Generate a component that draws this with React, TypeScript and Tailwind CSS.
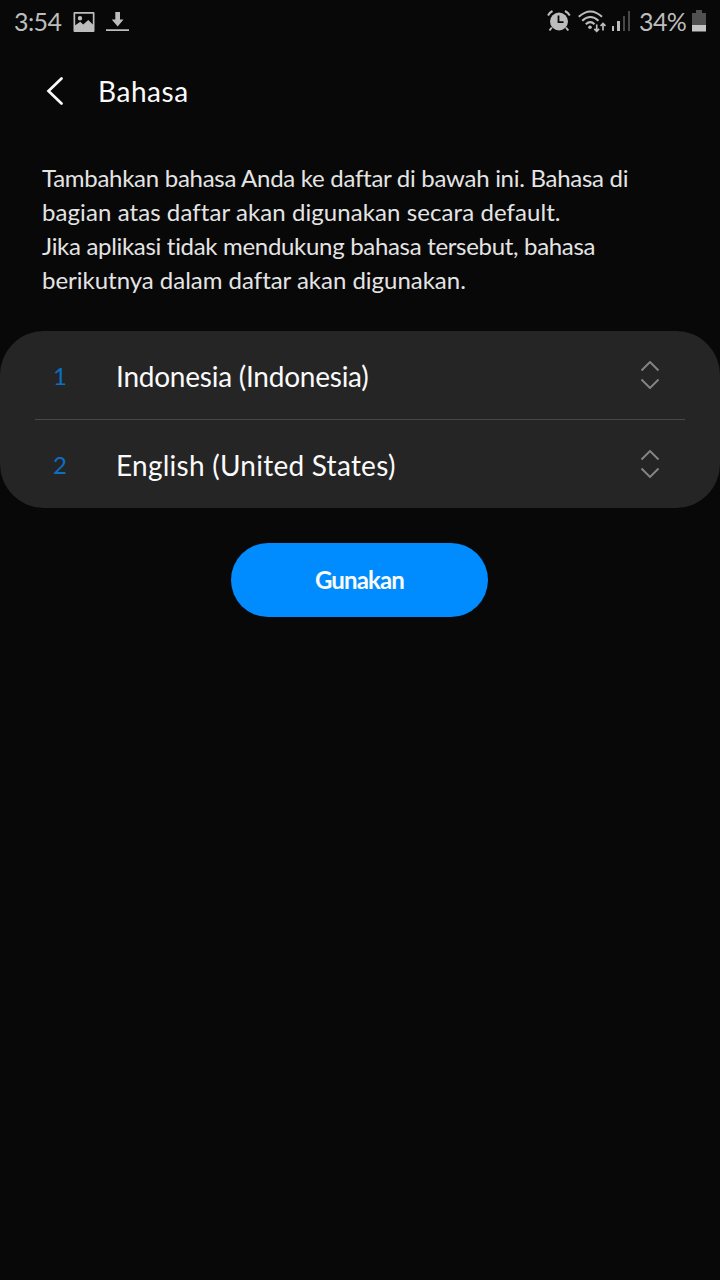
import React from "react";

function StatusBar() {
  return (
    <div className="flex h-11 items-center text-[#bdbdbd]">
      <span className="ml-[14px] w-[59px] text-[25px] leading-[44px] tracking-[-0.6px] pb-[2px] box-border">3:54</span>
      <svg className="h-5 w-[22px]" viewBox="0 0 22 20">
        <path
          fill="#bdbdbd"
          fillRule="evenodd"
          d="M1.5 0H20.5Q21.5 0 21.5 1V19Q21.5 20 20.5 20H1.5Q.5 20 .5 19V1Q.5 0 1.5 0ZM2.2 1.8V13.2L7.3 9.8L10.2 12.4L15.3 8L19.8 12.5V1.8ZM7 4A2.2 2.2 0 1 1 7 8.4A2.2 2.2 0 1 1 7 4Z"
        />
      </svg>
      <svg className="ml-[11px] h-5 w-[23px]" viewBox="0 0 23 20">
        <path fill="#bdbdbd" d="M9.3 0H14V7.5H17.5L11.7 14.5L5.7 7.5H9.3ZM0 17.2H23V19H0Z" />
      </svg>
      <div className="flex-1" />
      <svg className="mb-[2px] h-[22px] w-6" viewBox="0 0 24 22" fill="none">
        <circle cx="12" cy="11.5" r="9" fill="#bdbdbd" />
        <path
          stroke="#bdbdbd"
          strokeWidth="2"
          d="M1 5.5Q2.5 2.5 5.5 1M18 1Q21 2.5 22.8 5.5M4.8 17.5L2.5 20.5M19 17.5L21.3 20.5"
        />
        <path stroke="#080808" strokeWidth="1.8" d="M11.5 5.5V12.2H16.5" />
      </svg>
      <svg className="ml-[7px] mb-[2px] h-[23px] w-7" viewBox="0 0 28 23" fill="none">
        <path
          stroke="#bdbdbd"
          strokeWidth="2.1"
          d="M.8 6.8Q12.5-3.8 24 6.8M4.2 10.8Q12.3 3.2 20.5 10.8M7.8 14.2Q12.3 10 16.5 14.2"
        />
        <circle cx="12" cy="17.2" r="1.8" fill="#bdbdbd" />
        <path
          stroke="#bdbdbd"
          strokeWidth="1.7"
          d="M18.7 14.5V21M16.3 18.8L18.7 21.2L21.1 18.8M25 20.5V14M22.5 16L25 13.5L27.5 16"
        />
      </svg>
      <div className="ml-[6px] flex h-5 w-[19px] items-end gap-[3px] mb-[2px]">
        <div className="h-[5px] w-[2.3px] bg-[#bdbdbd]" />
        <div className="h-[10px] w-[2.3px] bg-[#bdbdbd]" />
        <div className="h-[15px] w-[2.3px] bg-[#484848]" />
        <div className="h-5 w-[2.3px] bg-[#484848]" />
      </div>
      <span className="ml-[8px] w-[50px] pb-[2px] text-[25px] leading-[44px] tracking-[-0.6px]">34%</span>
      <svg className="mr-[14px] mb-[2px] ml-[3px] h-[22px] w-[14px]" viewBox="0 0 14 22">
        <path fill="#505050" d="M4 0H10V3H14V15.5H0V3H4Z" />
        <path fill="#c4c4c4" d="M0 15H14V21.5H0Z" />
      </svg>
    </div>
  );
}

function LanguageRow({ index, label, labelClass }: { index: number; label: string; labelClass: string }) {
  return (
    <div className="flex h-[88px] items-center">
      <span className="-mr-px box-content w-[50px] pl-[35px] pt-[2px] text-center text-[24px] text-[#0b70c4]">{index}</span>
      <span className={`ml-8 flex-1 whitespace-nowrap pt-[2px] text-[28px] leading-[40px] text-[#fafafa] ${labelClass}`}>
        {label}
      </span>
      <svg className="mr-[60px] h-7 w-5" viewBox="0 0 20 28" fill="none" stroke="#858585" strokeWidth="1.9">
        <path d="M1.5 9.5L10 1L18.5 9.5M1.5 18.5L10 27L18.5 18.5" />
      </svg>
    </div>
  );
}

export default function App() {
  return (
    <div className="flex h-[1280px] w-[720px] flex-col bg-[#080808] font-['Lato',sans-serif] [font-variant-ligatures:none]">
      <StatusBar />
      <header className="flex h-[95px] items-center">
        <svg className="mb-px ml-[46px] h-7 w-[18px]" viewBox="0 0 18 28" fill="none">
          <path stroke="#fafafa" strokeWidth="2.7" strokeLinecap="round" d="M15.5 1.5L2.5 14L15.5 26.5" />
        </svg>
        <h1 className="ml-[34px] pb-[2px] text-[28px] tracking-[0.55px] text-[#fafafa]">Bahasa</h1>
      </header>
      <div className="ml-[42px] mt-[22px] h-[170px] whitespace-nowrap text-[24px] leading-[34px] text-[#e4e4e4]">
        <p className="tracking-[-0.28px]">Tambahkan bahasa Anda ke daftar di bawah ini. Bahasa di</p>
        <p className="tracking-[0.08px]">bagian atas daftar akan digunakan secara default.</p>
        <p className="tracking-[-0.31px]">Jika aplikasi tidak mendukung bahasa tersebut, bahasa</p>
        <p className="tracking-[-0.02px]">berikutnya dalam daftar akan digunakan.</p>
      </div>
      <main className="flex h-[177px] flex-col rounded-[44px] bg-[#252525]">
        <LanguageRow index={1} label="Indonesia (Indonesia)" labelClass="tracking-[-0.24px]" />
        <div className="mx-[35px] h-px bg-[#484848]" />
        <LanguageRow index={2} label="English (United States)" labelClass="tracking-[0.25px]" />
      </main>
      <button className="ml-[231px] mt-[35px] h-[74px] w-[257px] rounded-full bg-[#008cff] text-[24px] font-bold tracking-[-0.85px] text-[#fafafa]">
        Gunakan
      </button>
    </div>
  );
}
